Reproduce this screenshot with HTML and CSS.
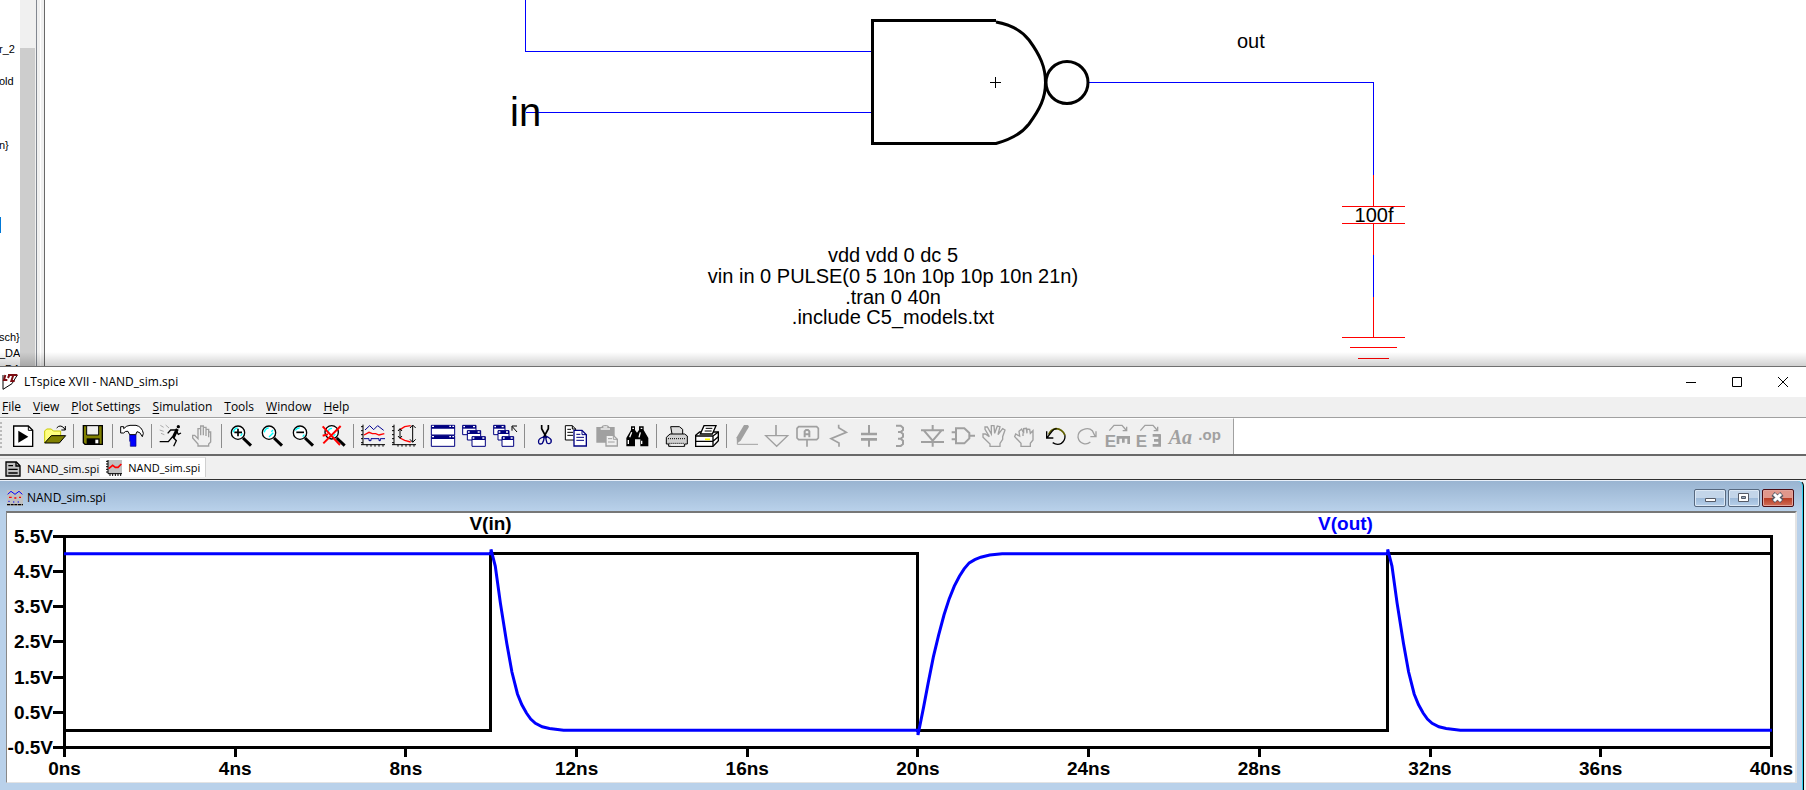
FILE: index.html
```html
<!DOCTYPE html>
<html lang="en">
<head>
<meta charset="utf-8">
<title>LTspice XVII - NAND_sim.spi</title>
<link rel="stylesheet" href="styles.css">
</head>
<body>
<section class="editor" aria-label="Schematic editor">
  <ul class="tree">
    <li class="row-3">r_2</li>
    <li class="row-5">old</li>
    <li class="row-9">n}</li>
    <li class="row-14 selected"></li>
    <li class="row-21">sch}</li>
    <li class="row-22">_DA</li>
    <li class="row-23">_DA</li>
  </ul>
  <div class="scrollbar"><div class="thumb"></div></div>
  <div class="splitter"></div>
  <svg class="schematic" role="img" aria-label="NAND gate schematic">
    <g class="wire">
      <path d="M525.5 0V51.5H872M525.5 112.5H872M1088 82.5H1373.5V175M1373.5 255V297"/>
    </g>
    <g class="part">
      <path d="M1373.5 175V206M1342 206.5H1405M1342 223.5H1405M1373.5 224V255M1373.5 297V337M1342 337.5H1405M1350 347.5H1397M1358 358.5H1389"/>
    </g>
    <g class="gate">
      <path d="M996 20.500H872.500V143.500H996C1013 139 1022 133 1029 124C1040 109 1045.500 98 1045.500 82.500C1045.500 67 1040 55 1029 40C1022 31 1013 25 996 22"/>
      <circle cx="1067" cy="82.500" r="21"/>
    </g>
    <path class="cross" d="M990 82.500H1001M995.500 77V88"/>
    <text class="net-large" x="510" y="126">in</text>
    <text x="1237" y="48">out</text>
    <text class="mid" x="1374" y="222">100f</text>
    <text class="mid" x="893" y="262">vdd vdd 0 dc 5</text>
    <text class="mid" x="893" y="283">vin in 0 PULSE(0 5 10n 10p 10p 10n 21n)</text>
    <text class="mid" x="893" y="304">.tran 0 40n</text>
    <text class="mid" x="893" y="324">.include C5_models.txt</text>
  </svg>
</section>

<main class="app">
  <header class="titlebar">
    <svg class="app-icon" viewBox="0 0 48 48" aria-hidden="true"><path d="M3 3V46L30 29L46 3" fill="#fff" stroke="#000" stroke-width="3"/><path d="M10 3L6 18H16M18 3H46M34 3L28 21H38M22 3L18 12" fill="none" stroke="#7c0c12" stroke-width="6"/></svg>
    <h1>LTspice XVII - NAND_sim.spi</h1>
    <div class="caption">
      <button aria-label="Minimize"><svg viewBox="0 0 12 12"><path d="M1 6.500H11"/></svg></button>
      <button aria-label="Maximize"><svg viewBox="0 0 12 12"><path d="M1.500 1.500H10.500V10.500H1.500Z"/></svg></button>
      <button aria-label="Close"><svg viewBox="0 0 12 12"><path d="M1 1L11 11M11 1L1 11"/></svg></button>
    </div>
  </header>

  <nav class="menu">
    <button><u>F</u>ile</button><button><u>V</u>iew</button><button><u>P</u>lot Settings</button><button><u>S</u>imulation</button><button><u>T</u>ools</button><button><u>W</u>indow</button><button><u>H</u>elp</button>
  </nav>

  <div class="toolbar-row">
  <div class="toolbar" role="toolbar">
    <span class="grip"></span>
    <button aria-label="Run netlist"><svg viewBox="0 0 72 72"><path d="M8 6H52L65 19V67H8Z" fill="#fff" stroke="#000" stroke-width="4"/><path d="M52 6V19H65" fill="none" stroke="#000" stroke-width="3"/><path d="M22 20L52 38L22 56Z"/></svg></button>
    <button aria-label="Open"><svg viewBox="0 0 72 72"><path d="M8 57V21L14 15H28L34 21H56V35H28Z" fill="#ffff80" stroke="#c8c800" stroke-width="3"/><path d="M8 57L28 35H71L52 57Z" fill="#808000" stroke="#000" stroke-width="3"/><path d="M44 12Q54 0 66 12L70 18M70 6V18H58" fill="none" stroke="#000" stroke-width="3"/></svg></button>
    <i class="sep"></i>
    <button aria-label="Save"><svg viewBox="0 0 72 72"><path d="M7 5H64V61H12L7 56Z" fill="#808000" stroke="#000" stroke-width="4"/><path d="M17 5H53V33H17Z" fill="#efefef" stroke="#000" stroke-width="3"/><path d="M17 43H56V61H17Z"/><path d="M43 47H52V58H43Z" fill="#fff"/></svg></button>
    <i class="sep"></i>
    <button aria-label="Control panel"><svg viewBox="0 0 72 72"><path d="M29 30H48V67H31V52H29Z" fill="#00f" stroke="#000080" stroke-width="2"/><path d="M2 8H11V14Q20 4 30 4H48Q66 8 70 28L67 38Q60 22 51 23L47 32H29L24 22Q16 20 11 27H2Z" fill="#fff" stroke="#000" stroke-width="3"/></svg></button>
    <i class="sep"></i>
    <button aria-label="Run"><svg viewBox="0 0 72 72"><circle cx="58" cy="8" r="5"/><path d="M55 15L42 42" stroke="#000" stroke-width="9"/><path d="M52 18H35L26 28M53 22L58 31L66 27M40 39L28 53H2M42 40L52 50L44 67" fill="none" stroke="#000" stroke-width="4"/><path d="M4 4L14 10M20 3L30 12M2 18L14 22M6 28L16 32" stroke="#888" stroke-width="2"/></svg></button>
    <button aria-label="Halt" disabled><svg viewBox="0 0 72 72"><path class="g4" d="M24 66V60L8 42V34H14L24 44V14H32V6H40V10H48V16H56V24H62V54L56 60V66ZM32 14V34M40 10V34M48 16V36M56 24V40"/></svg></button>
    <i class="sep"></i>
    <button aria-label="Zoom in"><svg viewBox="0 0 72 72"><circle class="lens" cx="27" cy="26" r="20"/><path class="glint" d="M13 25Q15 13 26 12M40 28L35 36"/><path d="M16 25H39M27 14V37" stroke="#000" stroke-width="5"/><path class="handle" d="M42 42L66 65"/></svg></button>
    <button aria-label="Pan"><svg viewBox="0 0 72 72"><circle class="lens" cx="27" cy="26" r="20"/><path class="glint" d="M13 25Q15 13 26 12M40 26L27 39M39 18L34 23"/><path class="handle" d="M42 42L66 65"/></svg></button>
    <button aria-label="Zoom out"><svg viewBox="0 0 72 72"><circle class="lens" cx="27" cy="26" r="20"/><path class="glint" d="M13 19Q18 11 26 12M40 32L35 38"/><path d="M16 25H39" stroke="#000" stroke-width="5"/><path class="handle" d="M42 42L66 65"/></svg></button>
    <button aria-label="Zoom full extents"><svg viewBox="0 0 72 72"><circle class="lens" cx="29" cy="25" r="20"/><path class="glint" d="M18 24Q20 13 30 13M40 30L34 37"/><path class="handle" d="M44 42L68 65"/><path d="M2 7L54 63M56 6L4 58M2 35L18 31" stroke="#f00" stroke-width="6"/></svg></button>
    <i class="sep"></i>
    <button aria-label="Autorange"><svg viewBox="0 0 72 72"><path class="k" d="M6 2V62M0 62H72M0 8H6M0 20H6M0 32H6M0 44H6M0 56H6M18 62V68M30 62V68M42 62V68M54 62V68M66 62V68"/><path d="M12 18L26 5L38 17L50 5L68 19" fill="none" stroke="#000090" stroke-width="3"/><path d="M9 33L24 25L34 29H44L54 33L70 29" fill="none" stroke="#f00" stroke-width="4"/><path d="M9 44H24V50H30V44H54V50H58V44H72" fill="none" stroke="#000090" stroke-width="3"/></svg></button>
    <button aria-label="Plot settings"><svg viewBox="0 0 72 72"><path class="k" d="M6 2V62M0 62H72M0 8H6M0 20H6M0 32H6M0 44H6M0 56H6M18 62V68M30 62V68M42 62V68M54 62V68M66 62V68"/><path d="M24 17L38 8L56 5M24 42L38 49L56 54" fill="none" stroke="#f00" stroke-width="4"/><path class="k" d="M24 15V42M18 21L24 14L30 21M18 36L24 43L30 36M62 4V54M54 12L62 3L71 12M54 46L62 55L71 46"/></svg></button>
    <i class="sep"></i>
    <button aria-label="Tile windows"><svg viewBox="0 0 72 72"><path d="M1 4H71V33H1ZM1 35H71V67H1Z" fill="#fff" stroke="#000080" stroke-width="3"/><path d="M1 4H71V14H1ZM1 35H71V45H1Z" fill="#000080"/><path d="M3 7H9M55 7H60M64 7H69M3 38H9M55 38H60M64 38H69" stroke="#fff" stroke-width="4"/></svg></button>
    <button aria-label="Cascade windows"><svg viewBox="0 0 72 72"><path class="win" d="M2 4H42V32H2Z"/><path class="bar" d="M2 4H42V14H2Z"/><path class="win" d="M16 20H56V48H16Z"/><path class="bar" d="M16 20H56V30H16Z"/><path class="win" d="M30 38H70V67H30Z"/><path class="bar" d="M30 38H70V48H30Z"/><path d="M4 8H9M33 8H39M18 24H23M47 24H53M32 42H37M61 42H67" stroke="#fff" stroke-width="4"/></svg></button>
    <button aria-label="Close windows"><svg viewBox="0 0 72 72"><path class="win" d="M2 4H36V32H2Z"/><path class="bar" d="M2 4H36V14H2Z"/><path class="win" d="M15 20H48V48H15Z"/><path class="bar" d="M15 20H48V30H15Z"/><path class="win" d="M27 38H62V67H27Z"/><path class="bar" d="M27 38H62V48H27Z"/><path d="M4 8H9M26 8H32M17 24H22M39 24H45M30 42H35M53 42H59" stroke="#fff" stroke-width="4"/><path class="k" d="M72 24L58 8M57 20V6H72"/></svg></button>
    <i class="sep"></i>
    <button aria-label="Cut"><svg viewBox="0 0 72 72"><path d="M29 3V14L44 42M49 3V14L34 42" fill="none" stroke="#000" stroke-width="5"/><path d="M37 38L27 42Q18 46 20 56Q23 63 31 58Q36 50 37 38M41 38Q44 36 52 42Q60 46 57 55Q52 62 45 57Q42 50 41 38" fill="none" stroke="#000080" stroke-width="4"/></svg></button>
    <button aria-label="Copy"><svg viewBox="0 0 72 72"><path d="M7 5H28L38 15V48H7Z" fill="#fff" stroke="#000" stroke-width="3"/><path class="k" d="M13 16H24M13 25H30M13 34H30M28 5V15H38"/><path d="M33 19H57L70 32V66H33Z" fill="#fff" stroke="#000080" stroke-width="4"/><path d="M40 31H52M40 40H63M40 49H63M57 19V32H70" fill="none" stroke="#000080" stroke-width="3"/></svg></button>
    <button aria-label="Paste" disabled><svg viewBox="0 0 72 72"><path d="M7 9H22Q24 3 34 3Q44 3 46 9H62V56H7Z" fill="#a0a0a0"/><path d="M20 15H48M28 9H40" stroke="#efefef" stroke-width="4"/><path d="M36 34H58L70 46V66H36Z" fill="#efefef" stroke="#a0a0a0" stroke-width="4"/><path class="g" d="M42 44H54M42 54H62M58 34V46H70"/></svg></button>
    <button aria-label="Find"><svg viewBox="0 0 72 72"><path d="M18 7H30V18L36 26L42 18V7H56V18L70 42V67H46V46H30V67H4V42L18 18Z"/><path d="M20 25L14 40M46 25L42 40M10 48V60M50 50V60M22 13H27M47 13H52" stroke="#fff" stroke-width="4"/></svg></button>
    <i class="sep"></i>
    <button aria-label="Print"><svg viewBox="0 0 72 72"><path d="M24 30L20 8H46L56 16V32" fill="#ddd" stroke="#000" stroke-width="3"/><path d="M7 40L18 30H62L70 36V60H62V67H14V60H7Z" fill="#d0d0d0" stroke="#000" stroke-width="3"/><path d="M12 44H66M14 58H62" stroke="#000" stroke-width="3" stroke-dasharray="3 3"/><path d="M20 63H58" stroke="#fff" stroke-width="4"/></svg></button>
    <button aria-label="Print setup"><svg viewBox="0 0 72 72"><path d="M2 34L14 24H70V50L54 67H2Z" fill="#fff" stroke="#000" stroke-width="4"/><path d="M2 36H54V66M54 36L70 24M2 52H54M54 52L70 38" fill="none" stroke="#000" stroke-width="4"/><path d="M16 30L27 5H63L52 30Z" fill="#fff" stroke="#000" stroke-width="4"/><path class="k" d="M32 13H52M29 21H50"/><path d="M30 46H45" stroke="#ff0" stroke-width="5"/></svg></button>
    <i class="sep"></i>
    <button aria-label="Wire" disabled><svg viewBox="0 0 72 72"><path d="M30 3H42L45 8L20 50L10 58L8 40Z" fill="#a0a0a0"/><path class="g" d="M10 40V61H72"/></svg></button>
    <button aria-label="Ground" disabled><svg viewBox="0 0 72 72"><path class="g5" d="M33 3V34"/><path class="g4" d="M2 35H68L35 67Z"/></svg></button>
    <button aria-label="Label net" disabled><svg viewBox="0 0 72 72"><path class="g5" d="M8 8H62L67 13V42L62 47H8L3 42V13ZM33 48V68"/><path d="M26 40V22L30 18H36L40 22V40M26 31H40" fill="none" stroke="#a0a0a0" stroke-width="6"/></svg></button>
    <button aria-label="Resistor" disabled><svg viewBox="0 0 72 72"><path class="g5" d="M35 2V11L58 25L12 44L36 57V68"/></svg></button>
    <button aria-label="Capacitor" disabled><svg viewBox="0 0 72 72"><path d="M33 3V30M33 47V68" stroke="#a0a0a0" stroke-width="6"/><path d="M9 30H57M9 46H57" stroke="#a0a0a0" stroke-width="8"/></svg></button>
    <button aria-label="Inductor" disabled><svg viewBox="0 0 72 72"><path class="g6" d="M21 5H35L42 11V18L35 24H27H35L42 30V38L35 44H27H35L42 50V60L35 66H21"/></svg></button>
    <button aria-label="Diode" disabled><svg viewBox="0 0 72 72"><path class="g6" d="M38 3V20M3 19H72M12 20L38 50L64 20M3 54H72M38 54V68"/></svg></button>
    <button aria-label="Component" disabled><svg viewBox="0 0 72 72"><path class="g6" d="M15 13H40L55 27V43L40 58H15ZM2 25H15M2 46H15M55 35H72"/></svg></button>
    <button aria-label="Move" disabled><svg viewBox="0 0 72 72"><path class="g4" d="M24 67V60L3 40V30H10L22 38L9 16V9H16L28 30V5H36L38 28L46 6L54 8L48 32L62 14L69 18L62 38V46L54 58V67Z"/></svg></button>
    <button aria-label="Drag" disabled><svg viewBox="0 0 72 72"><path class="g4" d="M24 67V58L5 38L8 30L20 36L18 22L26 15L32 28V14L40 13L42 28V15L50 16L52 28L60 20V48L52 58V67ZM30 28V36"/></svg></button>
    <button aria-label="Undo"><svg viewBox="0 0 72 72"><path d="M14 32Q20 16 36 14Q55 15 63 34" fill="none" stroke="#606000" stroke-width="5"/><path d="M8 22V42H28M10 40L24 22Q30 14 38 14M63 34Q64 50 52 58Q40 65 26 56" fill="none" stroke="#000" stroke-width="4"/></svg></button>
    <button aria-label="Redo" disabled><svg viewBox="0 0 72 72"><path class="g4" d="M63 22V38H46M60 36L52 20Q42 10 26 16Q8 22 9 40Q12 54 24 58Q36 63 46 54"/></svg></button>
    <button aria-label="Rotate" disabled><svg viewBox="0 0 72 72"><path class="g4" d="M10 20L24 4H48L60 18M62 8V20H50"/><text class="icon-e" x="-4" y="68">E</text><path d="M32 40H72M36 40V60M52 40V56M68 40V60" fill="none" stroke="#a0a0a0" stroke-width="8"/></svg></button>
    <button aria-label="Mirror" disabled><svg viewBox="0 0 72 72"><path class="g4" d="M10 20L24 4H48L60 18M62 8V20H50"/><text class="icon-e" x="-4" y="68">E</text><path d="M68 31V68M47 34H70M51 49H70M47 64H70" fill="none" stroke="#a0a0a0" stroke-width="8"/></svg></button>
    <button aria-label="Text" disabled><svg viewBox="0 0 72 72"><text class="icon-aa" x="2" y="61">Aa</text></svg></button>
    <button aria-label="SPICE directive" disabled><svg viewBox="0 0 72 72"><text class="icon-op" x="-2" y="48">.op</text></svg></button>
  </div>
  </div>

  <div class="tabs" role="tablist">
    <button role="tab"><svg viewBox="0 0 48 48"><path d="M3 3H34L45 14V45H3Z" fill="#c0c0c0" stroke="#000" stroke-width="4"/><path d="M33 3V15H45M10 14H24M10 25H38M10 36H38" fill="none" stroke="#000" stroke-width="4"/></svg>NAND_sim.spi</button>
    <button role="tab" class="active" aria-selected="true"><svg viewBox="0 0 48 48"><path d="M6 0H48V40H6Z" fill="#c0c0c0"/><path d="M6 0V41H48M0 4H6M0 12H6M0 20H6M0 28H6M0 36H6M12 41V48M20 41V48M28 41V48M36 41V48M44 41V48" fill="none" stroke="#000" stroke-width="3"/><path d="M8 26L20 16L28 22H36L46 12" fill="none" stroke="#f00" stroke-width="5"/></svg>NAND_sim.spi</button>
  </div>

  <section class="plot-window">
    <header class="plot-title">
      <svg viewBox="0 0 48 48" aria-hidden="true"><path d="M0 0H48V48H0Z" fill="#c0c0c0"/><path d="M2 13L12 4L24 13L36 4L46 13" fill="none" stroke="#00f" stroke-width="3"/><path d="M6 22H14M22 24H28M36 22H42" stroke="#f00" stroke-width="4"/><path d="M4 34H8M18 36H22M32 36H36" stroke="#00f" stroke-width="3"/><path d="M0 44H48" stroke="#000" stroke-width="4" stroke-dasharray="9 2"/></svg>
      <h2>NAND_sim.spi</h2>
      <div class="mdi">
        <button aria-label="Minimize plot"><svg viewBox="0 0 30 16"><path d="M10.500 8.500H20.500V11.500H10.500Z" fill="#fff" stroke="#555a66"/></svg></button>
        <button aria-label="Restore plot"><svg viewBox="0 0 30 16"><path d="M9.500 3.500H19.500V11.500H9.500Z" fill="#fff" stroke="#555a66"/><path d="M12.500 6.500H16.500V8.500H12.500Z" fill="#9ab" stroke="#555a66"/></svg></button>
        <button class="close" aria-label="Close plot"><svg viewBox="0 0 30 16"><path d="M10 4L19 11M19 4L10 11" stroke="#555a66" stroke-width="5"/><path d="M11 4L18 11M18 4L11 11" stroke="#fff" stroke-width="3"/></svg></button>
      </div>
    </header>
    <div class="plot">
      <div class="legend"><span>V(in)</span><span class="out">V(out)</span></div>
      <div class="y-axis"><span>5.5V</span><span>4.5V</span><span>3.5V</span><span>2.5V</span><span>1.5V</span><span>0.5V</span><span>-0.5V</span></div>
      <div class="y-ticks"><i></i><i></i><i></i><i></i><i></i><i></i><i></i></div>
      <div class="graph">
        <svg viewBox="0 0 4000 600" preserveAspectRatio="none" role="img" aria-label="V(in) and V(out) against time">
          <path class="trace-in" d="M0 50V550H1000V50H2000V550H3100V50H4000"/>
          <path class="trace-out" d="M0 50H1000V38L1010 85L1022 190L1037 304L1049 385L1062 447L1072 477L1083 501L1093 518L1104 530L1120 540L1137 545L1170 550H2000V563L2013 485L2024 415L2036 342L2048 282L2061 223L2073 178L2085 142L2097 114L2108 93L2120 76L2133 67L2147 60L2168 54L2197 50H3100V38L3110 85L3122 190L3137 304L3149 385L3162 447L3172 477L3183 501L3193 518L3204 530L3220 540L3237 545L3270 550H4000"/>
        </svg>
      </div>
      <div class="x-axis"><span>0ns</span><span>4ns</span><span>8ns</span><span>12ns</span><span>16ns</span><span>20ns</span><span>24ns</span><span>28ns</span><span>32ns</span><span>36ns</span><span>40ns</span></div>
    </div>
  </section>
</main>
</body>
</html>
```

FILE: styles.css
```css
* { box-sizing: border-box; }

body {
  margin: 0;
  min-height: 100vh;
  display: flex;
  flex-direction: column;
  background: #fff;
  color: #000;
  font: 12px "Open Sans", "Noto Sans", sans-serif;
}

button {
  margin: 0;
  padding: 0;
  border: 0;
  background: none;
  color: inherit;
  font: inherit;
}

svg { display: block; }

/* Schematic editor */
.editor {
  flex: 0 0 366px;
  display: flex;
  position: relative;
  overflow: hidden;
}

.editor::after {
  content: "";
  position: absolute;
  inset: auto 0 0;
  height: 14px;
  background: linear-gradient(rgba(0, 0, 0, 0), rgba(0, 0, 0, 0.18));
}

.tree {
  flex: 0 0 20px;
  display: grid;
  grid-template-rows: repeat(24, 16px);
  margin: -7px 0 0;
  padding: 0;
  list-style: none;
  overflow: hidden;
  text-indent: -1px;
  font: 11px/17px "Liberation Sans", Arial, sans-serif;
}

.row-3 { grid-row: 4; }
.row-5 { grid-row: 6; }
.row-9 { grid-row: 10; }
.row-14 { grid-row: 15; }
.row-21 { grid-row: 22; }
.row-22 { grid-row: 23; }
.row-23 { grid-row: 24; }
.selected { width: 1px; background: #0078d7; }

.scrollbar {
  flex: 0 0 16px;
  padding: 48px 1px 0 0;
  display: flex;
  background: #f0f0f0;
}

.thumb { flex: 1; background: #cdcdcd; }

.splitter {
  flex: 0 0 9px;
  border-left: 1px solid #828790;
  border-right: 1px solid #696969;
  background: linear-gradient(90deg, #f0f0f0 3px, #fff 3px 4px, #f0f0f0 4px);
}

.schematic {
  flex: 1;
  height: 366px;
  margin-left: -45px;
  overflow: visible;
  font: 20px "Liberation Sans", Arial, sans-serif;
}

.wire, .part, .gate, .cross { fill: none; shape-rendering: crispEdges; }
.wire { stroke: #00f; }
.part { stroke: #f00; }
.cross { stroke: #000; }
.gate { stroke: #000; stroke-width: 3; shape-rendering: auto; }
.net-large { font-size: 40px; }
.mid { text-anchor: middle; }

/* Application window */
.app {
  flex: 1;
  display: flex;
  flex-direction: column;
  border-top: 1px solid #707070;
  background: #f0f0f0;
}

.titlebar {
  display: flex;
  align-items: center;
  height: 30px;
  padding-left: 2px;
  background: #fff;
}

.app-icon { width: 16px; height: 16px; }

h1, h2 { margin: 0; font-size: 12px; font-weight: 400; line-height: 16px; }
h1 { padding-left: 6px; }

.caption { display: flex; margin-left: auto; }
.caption button { display: grid; place-items: center; width: 46px; height: 30px; }
.caption svg { width: 12px; height: 12px; fill: none; stroke: #000; }

.menu {
  display: flex;
  gap: 12px;
  height: 21px;
  padding-left: 2px;
  border-bottom: 1px solid #a0a0a0;
}

.menu button { line-height: 18px; }
.menu u { text-underline-offset: 2px; }

.toolbar-row {
  background: #fff;
  border-bottom: 2px solid #696969;
}

.toolbar {
  display: flex;
  align-items: center;
  width: max-content;
  height: 36px;
  padding: 0 6px 1px 0;
  background: #f0f0f0;
  border-top: 1px solid #fff;
  border-right: 1px solid #a0a0a0;
}

.grip {
  width: 2px;
  height: 28px;
  margin-right: 6px;
  background: repeating-linear-gradient(#bbb 0 2px, #f0f0f0 2px 4px);
}

.toolbar button { width: 31px; padding-left: 3px; }
.toolbar svg { width: 24px; height: 24px; overflow: visible; }
.sep { width: 8px; height: 24px; border-left: 3px solid #f0f0f0; background: linear-gradient(90deg, #8c8c8c 1px, #f0f0f0 1px); }

.lens { fill: #fff; stroke: #000; stroke-width: 4; }
.glint { fill: none; stroke: #0ff; stroke-width: 4; }
.handle { stroke: #000; stroke-width: 9; }
.k { fill: none; stroke: #000; stroke-width: 3; }
.g, .g4, .g5, .g6 { fill: none; stroke: #a0a0a0; stroke-width: 3; }
.g4 { stroke-width: 4; }
.g5 { stroke-width: 5; }
.g6 { stroke-width: 6; }
.win { fill: #fff; stroke: #000080; stroke-width: 3; }
.bar { fill: #000080; }
.icon-e { fill: #a0a0a0; font: bold 51px "Liberation Sans", sans-serif; }
.icon-aa { fill: #a0a0a0; font: italic bold 60px "Liberation Serif", serif; }
.icon-op { fill: #a0a0a0; font: bold 45px "Liberation Sans", sans-serif; }

.tabs {
  display: flex;
  align-items: flex-start;
  height: 24px;
  padding-top: 1px;
  border-bottom: 1px solid #303030;
  font-size: 11px;
}

.tabs button {
  display: flex;
  align-items: center;
  gap: 6px;
  height: 20px;
  margin-top: 1px;
  padding: 0 1px 0 5px;
  border-top: 1px solid #e0e0e0;
}

.tabs .active {
  margin-top: 0;
  padding: 0 5px 0 6px;
  background: #fff;
  border-right: 1px solid #d0d0d0;
}

.tabs svg, .plot-title svg { flex: none; width: 16px; height: 16px; }

/* Waveform window */
.plot-window {
  flex: 1;
  display: flex;
  flex-direction: column;
  margin-right: 2px;
  padding: 0 6px 7px 6px;
  border-right: 1px solid #000;
  border-top: 1px solid #e8f0fa;
  border-radius: 0 6px 0 0;
  box-shadow: inset -1px 0 #30d0f0;
  background: linear-gradient(#99b4d1, #b9d1ea 30px);
}

.plot-title {
  display: flex;
  align-items: center;
  gap: 4px;
  height: 30px;
  padding: 4px 3px 0 1px;
}

.plot-title .mdi { display: flex; gap: 2px; margin-left: auto; }

.mdi button {
  width: 32px;
  height: 18px;
  border: 1px solid #56687f;
  border-radius: 2px;
  box-shadow: inset 0 0 0 1px #dce8f5;
  background: linear-gradient(#c3d5e9 50%, #9db9d8 50%, #b7d0ea);
}

.mdi .close {
  border-color: #4b0d14;
  box-shadow: inset 0 0 0 1px #e3a49b;
  background: linear-gradient(#e0978b 50%, #b93a22 50%, #cf6f58);
}

.plot-title .mdi svg { width: 30px; height: 16px; }

.plot {
  flex: 1;
  display: grid;
  grid-template: 22px minmax(150px, 1fr) 33px / 46px 10px 1fr;
  padding-right: 22px;
  border: 1px solid #888;
  border-top: 2px solid #777;
  border-right: 2px solid #e3e3e3;
  border-bottom: 1px solid #e3e3e3;
  background: #fff;
  font: bold 19px/21px "Liberation Sans", Arial, sans-serif;
}

.legend {
  grid-area: 1 / 3;
  display: grid;
  grid-template-columns: 1fr 1fr;
  text-align: center;
}

.out { color: #00f; }

.y-axis, .y-ticks {
  grid-row: 2;
  display: flex;
  flex-direction: column;
  justify-content: space-between;
}

.y-axis { align-items: flex-end; }
.y-axis span { display: flex; align-items: center; height: 3px; white-space: nowrap; }
.y-ticks i { height: 3px; background: #000; }

.graph {
  grid-area: 2 / 3;
  display: flex;
  border: 3px solid #000;
}

.graph svg {
  flex: 1;
  contain: size;
  align-self: stretch;
  margin: -2px;
  overflow: visible;
}

.graph path { fill: none; stroke-width: 3; vector-effect: non-scaling-stroke; }
.trace-in { stroke: #000; shape-rendering: crispEdges; }
.trace-out { stroke: #00f; }

.x-axis {
  grid-area: 3 / 3;
  display: flex;
  justify-content: space-between;
  line-height: 23px;
}

.x-axis span {
  display: flex;
  flex-direction: column;
  align-items: center;
  width: 3px;
  white-space: nowrap;
}

.x-axis span::before { content: ""; flex: none; width: 3px; height: 8px; background: #000; }
```
